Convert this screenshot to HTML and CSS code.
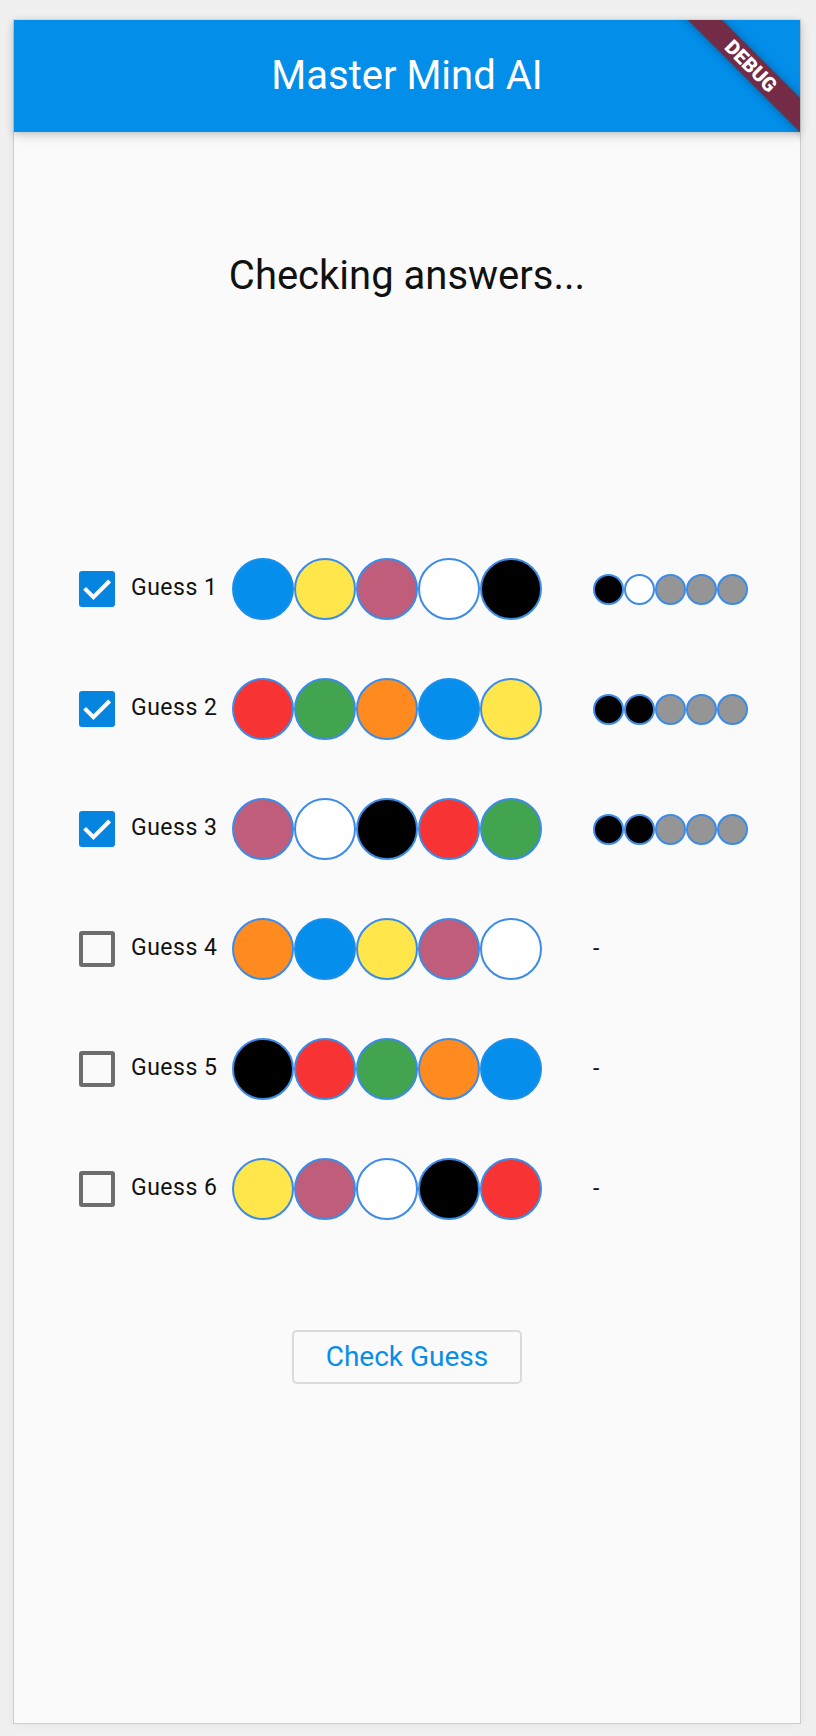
FILE: index.html
```html
<!DOCTYPE html>
<html lang="en">
<head>
<meta charset="utf-8">
<title>Master Mind AI</title>
<link rel="stylesheet" href="styles.css">
</head>
<body>
<div class="device">
  <header class="appbar"><h1 class="title">Master Mind AI</h1></header>
  <main class="content">
    <h2 class="status">Checking answers...</h2>
    <div class="board">
      <div class="row">
        <span class="box on"><svg viewBox="0 0 36 36" width="36" height="36"><path d="M5.6 17.4 L14.4 26.2 L30.6 10" fill="none" stroke="#fff" stroke-width="4"/></svg></span>
        <span class="label">Guess 1</span>
        <div class="code"><span class="peg blue"></span><span class="peg yellow"></span><span class="peg pink"></span><span class="peg white"></span><span class="peg black"></span></div>
        <div class="feedback"><span class="pin black"></span><span class="pin white"></span><span class="pin gray"></span><span class="pin gray"></span><span class="pin gray"></span></div>
      </div>
      <div class="row">
        <span class="box on"><svg viewBox="0 0 36 36" width="36" height="36"><path d="M5.6 17.4 L14.4 26.2 L30.6 10" fill="none" stroke="#fff" stroke-width="4"/></svg></span>
        <span class="label">Guess 2</span>
        <div class="code"><span class="peg red"></span><span class="peg green"></span><span class="peg orange"></span><span class="peg blue"></span><span class="peg yellow"></span></div>
        <div class="feedback"><span class="pin black"></span><span class="pin black"></span><span class="pin gray"></span><span class="pin gray"></span><span class="pin gray"></span></div>
      </div>
      <div class="row">
        <span class="box on"><svg viewBox="0 0 36 36" width="36" height="36"><path d="M5.6 17.4 L14.4 26.2 L30.6 10" fill="none" stroke="#fff" stroke-width="4"/></svg></span>
        <span class="label">Guess 3</span>
        <div class="code"><span class="peg pink"></span><span class="peg white"></span><span class="peg black"></span><span class="peg red"></span><span class="peg green"></span></div>
        <div class="feedback"><span class="pin black"></span><span class="pin black"></span><span class="pin gray"></span><span class="pin gray"></span><span class="pin gray"></span></div>
      </div>
      <div class="row">
        <span class="box"></span>
        <span class="label">Guess 4</span>
        <div class="code"><span class="peg orange"></span><span class="peg blue"></span><span class="peg yellow"></span><span class="peg pink"></span><span class="peg white"></span></div>
        <div class="feedback"><span class="dash">-</span></div>
      </div>
      <div class="row">
        <span class="box"></span>
        <span class="label">Guess 5</span>
        <div class="code"><span class="peg black"></span><span class="peg red"></span><span class="peg green"></span><span class="peg orange"></span><span class="peg blue"></span></div>
        <div class="feedback"><span class="dash">-</span></div>
      </div>
      <div class="row">
        <span class="box"></span>
        <span class="label">Guess 6</span>
        <div class="code"><span class="peg yellow"></span><span class="peg pink"></span><span class="peg white"></span><span class="peg black"></span><span class="peg red"></span></div>
        <div class="feedback"><span class="dash">-</span></div>
      </div>
    </div>
    <div class="actions"><button class="check-btn">Check Guess</button></div>
  </main>
  <div class="banner-clip"><div class="banner">DEBUG</div></div>
</div>
</body>
</html>
```
FILE: styles.css
```css
html, body {
  margin: 0;
  padding: 0;
}
body {
  background: #eff0ef;
  font-family: Roboto, "Liberation Sans", sans-serif;
  width: 816px;
  height: 1736px;
  overflow: hidden;
}
.device {
  position: relative;
  box-sizing: border-box;
  margin: 19px 0 0 13px;
  width: 788px;
  height: 1705px;
  border: 1px solid #cdcdcd;
  border-top-color: #dcdcdc;
  background: #fafafa;
  box-shadow: 0 0 8px rgba(0, 0, 0, 0.06);
}
.appbar {
  position: relative;
  z-index: 1;
  height: 112px;
  background: #028ee9;
  display: flex;
  align-items: center;
  justify-content: center;
  box-shadow: 0 4px 10px rgba(0, 0, 0, 0.16), 0 2px 4px rgba(0, 0, 0, 0.08);
}
.title {
  margin: 0;
  color: #fff;
  font-size: 40px;
  font-weight: 400;
  line-height: 48px;
}
.content {
  padding-top: 120px;
  display: flex;
  flex-direction: column;
}
.status {
  margin: 0;
  text-align: center;
  font-size: 40px;
  font-weight: 400;
  line-height: 48px;
  color: #111;
}
.board {
  margin-top: 229px;
  display: flex;
  flex-direction: column;
}
.row {
  height: 120px;
  display: flex;
  align-items: center;
  padding-left: 65px;
}
.box {
  box-sizing: border-box;
  width: 36px;
  height: 36px;
  border-radius: 3px;
  border: 4px solid #6d6d6d;
  margin-right: 16px;
  flex: none;
}
.box.on {
  border: none;
  background: #0584e0;
}
.box svg {
  display: block;
}
.label {
  width: 101px;
  font-size: 23px;
  letter-spacing: 0.5px;
  line-height: 26px;
  color: #111;
  padding-bottom: 2px;
}
.code {
  display: flex;
}
.peg {
  box-sizing: border-box;
  width: 62px;
  height: 62px;
  border-radius: 50%;
  border: 2px solid #3b8be9;
}
.feedback {
  margin-left: 51px;
  display: flex;
  align-items: center;
}
.pin {
  box-sizing: border-box;
  width: 31px;
  height: 31px;
  border-radius: 50%;
  border: 2px solid #3b8be9;
}
.dash {
  font-size: 23px;
  line-height: 26px;
  color: #111;
}
.blue { background: #058eeb; border-color: #1b8ee9; }
.yellow { background: #ffe64a; }
.pink { background: #c05d7a; }
.white { background: #fff; }
.black { background: #000; }
.red { background: #f83333; }
.green { background: #42a44e; }
.orange { background: #fe8a20; }
.gray { background: #959595; }
.actions {
  margin-top: 81px;
  display: flex;
  justify-content: center;
}
.check-btn {
  box-sizing: border-box;
  height: 54px;
  padding: 0 32px;
  background: transparent;
  border: 2px solid #dadada;
  border-radius: 5px;
  color: #098dea;
  font-family: Roboto, "Liberation Sans", sans-serif;
  font-size: 28px;
  line-height: 32px;
}
.banner-clip {
  position: absolute;
  inset: 0;
  overflow: hidden;
  pointer-events: none;
  z-index: 2;
}
.banner {
  position: absolute;
  left: 637px;
  top: 34px;
  width: 200px;
  height: 24px;
  transform: rotate(45deg);
  background: rgba(132, 30, 46, 0.88);
  box-shadow: 0 0 8px rgba(0, 0, 0, 0.35);
  color: #fff;
  font-size: 20px;
  font-weight: 900;
  line-height: 24px;
  text-align: center;
}
```
